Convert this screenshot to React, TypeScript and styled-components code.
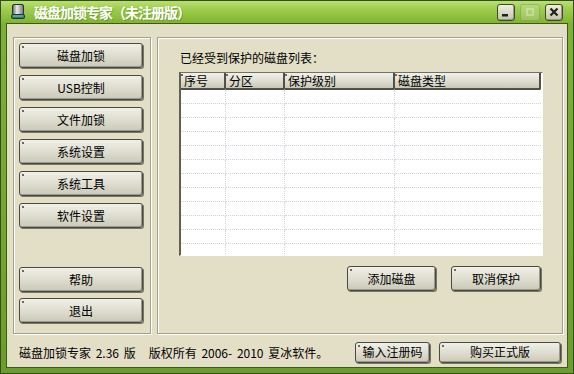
import React from "react";
import styled, { createGlobalStyle } from "styled-components";

const GlobalStyle = createGlobalStyle`
  html, body { margin: 0; padding: 0; width: 574px; height: 374px; overflow: hidden; background: #4d7a22; }
  * { box-sizing: border-box; }
  body { font-family: "Noto Sans CJK SC", "Noto Sans", sans-serif; }
`;

const Window = styled.div`
  width: 574px;
  height: 374px;
  display: flex;
  flex-direction: column;
  background: linear-gradient(#7fb238, #6c9d2c);
  border: 1px solid #34501a;
`;

const TitleBar = styled.div`
  height: 22px;
  flex: none;
  display: flex;
  align-items: center;
  padding: 0 10px 0 10px;
  background: linear-gradient(#badf72 0%, #a0ce50 35%, #8cbe3b 75%, #80b432 100%);
`;

const TitleText = styled.div`
  margin-left: 8px;
  color: #ffffff;
  font-size: 14px;
  font-weight: 700;
  letter-spacing: -1px;
  line-height: 18px;
  text-shadow: 1px 1px 0 rgba(40, 80, 10, 0.3);
`;

const TitleButtons = styled.div`
  margin-left: auto;
  display: flex;
  gap: 5px;
  align-items: center;
`;

const TitleBtn = styled.div<{ $disabled?: boolean; $w?: number }>`
  width: ${(p) => p.$w ?? 18}px;
  height: 17px;
  border-radius: 3px;
  display: flex;
  align-items: center;
  justify-content: center;
  border: 1px solid ${(p) => (p.$disabled ? "rgba(90,120,60,0.35)" : "#3c4a2c")};
  background: ${(p) =>
    p.$disabled
      ? "rgba(220,225,200,0.28)"
      : "linear-gradient(#f0eee2, #d6d3bf 60%, #c4c1aa)"};
  box-shadow: ${(p) => (p.$disabled ? "none" : "inset -1px -1px 0 #9a9884")};
`;

const Frame = styled.div`
  flex: 1;
  margin: 0 5px 5px 5px;
  border: 1px solid #3b5a1b;
  background: #e3dfc7;
  display: flex;
  flex-direction: column;
  padding: 13px 4px 0 6px;
`;

const MainRow = styled.div`
  display: flex;
  gap: 6px;
  height: 297px;
`;

const Panel = styled.div<{ $w: number }>`
  width: ${(p) => p.$w}px;
  height: 100%;
  border: 1px solid #a3a18c;
  box-shadow: inset 1px 1px 0 #ffffff, 1px 1px 0 #ffffff;
  display: flex;
  flex-direction: column;
`;

const LeftPanel = styled(Panel)`
  padding: 5px 7px 10px 5px;
  gap: 7px;
`;

const BottomGroup = styled.div`
  margin-top: auto;
  display: flex;
  flex-direction: column;
  gap: 6px;
`;

const RightPanel = styled(Panel)`
  padding: 12px 19px 0 21px;
`;

const Button = styled.div<{ $w?: number; $h?: number }>`
  position: relative;
  width: ${(p) => (p.$w ? `${p.$w}px` : "100%")};
  height: ${(p) => p.$h ?? 25}px;
  flex: none;
  border: 1px solid #4a4a42;
  border-radius: 3px;
  background: linear-gradient(#f1f0e8 0%, #e0dfd2 45%, #cbc9b7 100%);
  box-shadow: inset -1px -1px 0 #9c9a88, 1px 1px 0 #777565;
  display: flex;
  align-items: center;
  justify-content: center;
  font-size: 12px;
  color: #000;
  line-height: 1;
  &::before {
    content: "";
    position: absolute;
    left: 2px;
    top: 2px;
    width: 2px;
    height: 2px;
    background: #6a6a60;
  }
`;

const Label = styled.div`
  font-size: 12px;
  line-height: 16px;
  color: #000;
  margin-left: 1px;
  margin-bottom: 6px;
`;

const Table = styled.div`
  height: 184px;
  border-top: 1px solid #707068;
  border-left: 2px solid #606058;
  border-right: 1px solid #ffffff;
  border-bottom: 1px solid #ffffff;
  background: #ffffff;
  display: flex;
  flex-direction: column;
  overflow: hidden;
`;

const GridRow = styled.div<{ $h: number }>`
  display: grid;
  grid-template-columns: 45px 59px 110px 146px;
  height: ${(p) => p.$h}px;
  flex: none;
`;

const HeadCell = styled.div`
  position: relative;
  height: 17px;
  padding-left: 3px;
  font-size: 12px;
  line-height: 15px;
  color: #000;
  background: linear-gradient(#f2f1ea, #dddccf 55%, #c9c8b8);
  border-right: 2px solid #505048;
  border-bottom: 2px solid #505048;
  border-bottom-right-radius: 2px;
  &::before {
    content: "";
    position: absolute;
    left: 0;
    top: 1px;
    width: 2px;
    height: 2px;
    background: #6a6a60;
  }
`;

const BodyCell = styled.div<{ $last?: boolean }>`
  border-bottom: 1px dotted #d6d0de;
  border-right: ${(p) => (p.$last ? "none" : "1px dotted #d8d2e0")};
`;

const ActionRow = styled.div`
  display: flex;
  justify-content: flex-end;
  gap: 15px;
  margin-top: 10px;
  padding-right: 2px;
`;

const StatusRow = styled.div`
  flex: 1;
  display: flex;
  align-items: center;
  padding: 3px 2px 0 6px;
  gap: 9px;
`;

const StatusText = styled.div`
  font-size: 12px;
  color: #000;
  white-space: pre;
  word-spacing: 2px;
  margin-right: auto;
`;

const Gap = styled.span`
  display: inline-block;
  width: 13px;
`;

const DriveIcon = () => (
  <svg width="15" height="16" viewBox="0 0 15 16">
    <defs>
      <linearGradient id="dg" x1="0" x2="1" y1="0" y2="0">
        <stop offset="0" stopColor="#5a5e62" />
        <stop offset="0.4" stopColor="#e8ecef" />
        <stop offset="1" stopColor="#6e7276" />
      </linearGradient>
    </defs>
    <rect x="1.5" y="0.5" width="11" height="10" rx="1.5" fill="url(#dg)" stroke="#2c3034" />
    <rect x="0.5" y="10.5" width="13" height="4" rx="1" fill="#2f7a6a" stroke="#1c3a30" />
    <rect x="2" y="11.5" width="10" height="1" fill="#7fd0b0" />
  </svg>
);

const headers = ["序号", "分区", "保护级别", "磁盘类型"];
const rows = Array.from({ length: 12 }, (_, i) => i);

export default function App() {
  return (
    <>
      <GlobalStyle />
      <Window>
        <TitleBar>
          <DriveIcon />
          <TitleText>磁盘加锁专家（未注册版）</TitleText>
          <TitleButtons>
            <TitleBtn>
              <svg width="10" height="10" viewBox="0 0 10 10">
                <rect x="1" y="7" width="6" height="2.5" fill="#1e2418" />
              </svg>
            </TitleBtn>
            <TitleBtn $disabled $w={20}>
              <svg width="10" height="10" viewBox="0 0 10 10">
                <rect x="2" y="2" width="6" height="6" fill="none" stroke="rgba(230,235,215,0.6)" strokeWidth="1.5" />
              </svg>
            </TitleBtn>
            <TitleBtn>
              <svg width="10" height="10" viewBox="0 0 10 10">
                <path d="M1.5 1.5 L8.5 8.5 M8.5 1.5 L1.5 8.5" stroke="#1e2418" strokeWidth="2.2" />
              </svg>
            </TitleBtn>
          </TitleButtons>
        </TitleBar>
        <Frame>
          <MainRow>
            <LeftPanel $w={138}>
              <Button>磁盘加锁</Button>
              <Button>USB控制</Button>
              <Button>文件加锁</Button>
              <Button>系统设置</Button>
              <Button>系统工具</Button>
              <Button>软件设置</Button>
              <BottomGroup>
                <Button>帮助</Button>
                <Button>退出</Button>
              </BottomGroup>
            </LeftPanel>
            <RightPanel $w={406}>
              <Label>已经受到保护的磁盘列表：</Label>
              <Table>
                <GridRow $h={17}>
                  {headers.map((h) => (
                    <HeadCell key={h}>{h}</HeadCell>
                  ))}
                </GridRow>
                {rows.map((r) => (
                  <GridRow key={r} $h={14}>
                    <BodyCell />
                    <BodyCell />
                    <BodyCell />
                    <BodyCell $last />
                  </GridRow>
                ))}
              </Table>
              <ActionRow>
                <Button $w={89}>添加磁盘</Button>
                <Button $w={90}>取消保护</Button>
              </ActionRow>
            </RightPanel>
          </MainRow>
          <StatusRow>
            <StatusText>
              磁盘加锁专家 2.36 版<Gap />版权所有 2006- 2010 夏冰软件。
            </StatusText>
            <Button $w={75} $h={21}>输入注册码</Button>
            <Button $w={122} $h={21}>购买正式版</Button>
          </StatusRow>
        </Frame>
      </Window>
    </>
  );
}
